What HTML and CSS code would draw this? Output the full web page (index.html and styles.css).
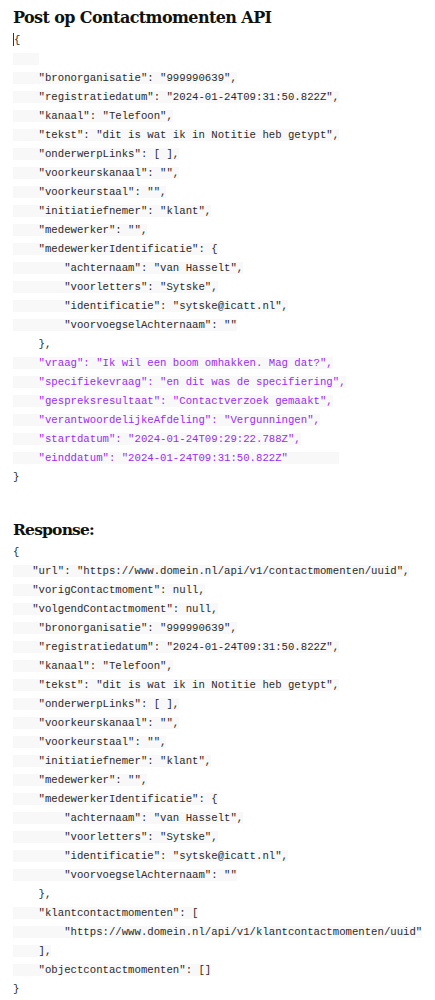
FILE: index.html
```html
<!DOCTYPE html>
<html lang="nl">
<head>
<meta charset="utf-8">
<title>Post op Contactmomenten API</title>
<link rel="stylesheet" href="styles.css">
</head>
<body>
<section class="block">
  <h2 class="title">Post op Contactmomenten API</h2>
  <div class="code">
<div class="ln"><span class="caret"></span>{</div>
<div class="ln"><span class="hl">    </span></div>
<div class="ln"><span class="hl">    "bronorganisatie": "999990639",</span></div>
<div class="ln"><span class="hl">    "registratiedatum": "2024-01-24T09:31:50.822Z",</span></div>
<div class="ln"><span class="hl">    "kanaal": "Telefoon",</span></div>
<div class="ln"><span class="hl">    "tekst": "dit is wat ik in Notitie heb getypt",</span></div>
<div class="ln"><span class="hl">    "onderwerpLinks": [ ],</span></div>
<div class="ln"><span class="hl">    "voorkeurskanaal": "",</span></div>
<div class="ln"><span class="hl">    "voorkeurstaal": "",</span></div>
<div class="ln"><span class="hl">    "initiatiefnemer": "klant",</span></div>
<div class="ln"><span class="hl">    "medewerker": "",</span></div>
<div class="ln"><span class="hl">    "medewerkerIdentificatie": {</span></div>
<div class="ln"><span class="hl">        "achternaam": "van Hasselt",</span></div>
<div class="ln"><span class="hl">        "voorletters": "Sytske",</span></div>
<div class="ln"><span class="hl">        "identificatie": "sytske@icatt.nl",</span></div>
<div class="ln"><span class="hl">        "voorvoegselAchternaam": ""</span></div>
<div class="ln">    },</div>
<div class="ln p"><span class="hl">    "vraag": "Ik wil een boom omhakken. Mag dat?",</span></div>
<div class="ln p"><span class="hl">    "specifiekevraag": "en dit was de specifiering",</span></div>
<div class="ln p"><span class="hl">    "gespreksresultaat": "Contactverzoek gemaakt",</span></div>
<div class="ln p"><span class="hl">    "verantwoordelijkeAfdeling": "Vergunningen",</span></div>
<div class="ln p"><span class="hl">    "startdatum": "2024-01-24T09:29:22.788Z",</span></div>
<div class="ln p"><span class="hl">    "einddatum": "2024-01-24T09:31:50.822Z"        </span></div>
<div class="ln">}</div>
  </div>
</section>
<section class="block resp">
  <h2 class="title">Response:</h2>
  <div class="code">
<div class="ln">{</div>
<div class="ln"><span class="hl">   "url": "https://www.domein.nl/api/v1/contactmomenten/uuid",</span></div>
<div class="ln"><span class="hl">   "vorigContactmoment": null,</span></div>
<div class="ln"><span class="hl">   "volgendContactmoment": null,</span></div>
<div class="ln"><span class="hl">    "bronorganisatie": "999990639",</span></div>
<div class="ln"><span class="hl">    "registratiedatum": "2024-01-24T09:31:50.822Z",</span></div>
<div class="ln"><span class="hl">    "kanaal": "Telefoon",</span></div>
<div class="ln"><span class="hl">    "tekst": "dit is wat ik in Notitie heb getypt",</span></div>
<div class="ln"><span class="hl">    "onderwerpLinks": [ ],</span></div>
<div class="ln"><span class="hl">    "voorkeurskanaal": "",</span></div>
<div class="ln"><span class="hl">    "voorkeurstaal": "",</span></div>
<div class="ln"><span class="hl">    "initiatiefnemer": "klant",</span></div>
<div class="ln"><span class="hl">    "medewerker": "",</span></div>
<div class="ln"><span class="hl">    "medewerkerIdentificatie": {</span></div>
<div class="ln"><span class="hl">        "achternaam": "van Hasselt",</span></div>
<div class="ln"><span class="hl">        "voorletters": "Sytske",</span></div>
<div class="ln"><span class="hl">        "identificatie": "sytske@icatt.nl",</span></div>
<div class="ln"><span class="hl">        "voorvoegselAchternaam": ""</span></div>
<div class="ln">    },</div>
<div class="ln"><span class="hl">    "klantcontactmomenten": [</span></div>
<div class="ln"><span class="hl">        "https://www.domein.nl/api/v1/klantcontactmomenten/uuid"</span></div>
<div class="ln"><span class="hl">    ],</span></div>
<div class="ln"><span class="hl">    "objectcontactmomenten": []</span></div>
<div class="ln">}</div>
  </div>
</section>
</body>
</html>
```

FILE: styles.css
```css
html, body {
  margin: 0;
  padding: 0;
  background: #ffffff;
}

body {
  padding-left: 13px;
  color: #111111;
}

.title {
  margin: 0;
  padding-top: 6px;
  height: 25px;
  font-family: "DejaVu Serif", "Liberation Serif", serif;
  font-weight: bold;
  font-size: 16px;
  letter-spacing: -0.6px;
  line-height: 24px;
  color: #111111;
  white-space: nowrap;
}

.resp .title {
  padding-top: 0;
  margin-top: 30px;
  height: 26px;
  line-height: 26px;
  font-size: 15.5px;
  letter-spacing: -0.8px;
}

.code {
  font-family: "Liberation Mono", "Courier New", monospace;
  font-size: 10.67px;
  color: #2a2a2a;
}

.ln {
  height: 19px;
  line-height: 19px;
  white-space: pre;
}

.hl {
  background: #f8f8f8;
}

.p {
  color: #9a2cf2;
}

.caret {
  display: inline-block;
  width: 0;
  height: 13px;
  border-left: 1px solid #333333;
  vertical-align: -3px;
}
```
